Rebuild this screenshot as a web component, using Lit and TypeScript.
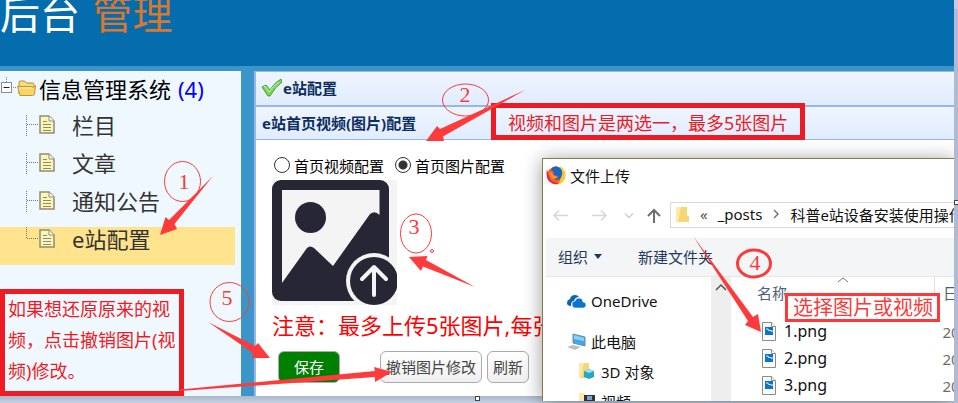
import { LitElement, html, svg, css } from "lit";
import { customElement } from "lit/decorators.js";
import { classMap } from "lit/directives/class-map.js";

const leaves = ["栏目", "文章", "通知公告", "e站配置"];
const files = ["1.png", "2.png", "3.png"];

const pageIcon = svg`<svg class="leaf-icon" width="16" height="20" viewBox="0 0 16 20" aria-hidden="true">
  <path d="M1 1h9l5 5v12H1z" fill="#fdf6b8" stroke="#8f8c78" stroke-width="1.5"/>
  <path d="M10 1v5h5" fill="#fffde8" stroke="#8f8c78"/>
  <path d="M4 6.500h4M4 9.500h8M4 12.500h8M4 15.500h8" stroke="#8f8b6a" fill="none"/></svg>`;

const fileIcon = svg`<svg width="14" height="19" viewBox="0 0 14 19" aria-hidden="true">
  <path d="M.5.500h9l4 4v14H.500z" fill="#fafafa" stroke="#8a8a8a"/>
  <path d="M9.500.500v4h4" fill="#fff" stroke="#8a8a8a"/>
  <rect x="3" y="5" width="8" height="8" fill="#0a74d1"/>
  <path d="M4 7h2l1 2 1-1 2 2V8" fill="none" stroke="#d9ecfb"/></svg>`;

@customElement("admin-tree")
export class AdminTree extends LitElement {
  static styles = css`
    :host { display: block; padding-top: 5px; }
    ul { list-style: none; margin: 0; padding: 0; }
    a { color: #333; text-decoration: none; }
    .root { display: flex; align-items: center; height: 28px; margin-bottom: 9px; font-size: 22px; line-height: 26px; color: #000; }
    .root svg { flex: none; }
    .root .label { margin-left: 3px; }
    .root span { height: 28px; }
    .count { color: #00f; margin-left: 7px; }
    .leaf { display: flex; align-items: flex-start; height: 38px; margin-right: 6px; padding-left: 26px; }
    .leaf.active { background: #ffe48d; }
    .leaf-icon { margin: 2px 0 0 1px; }
    .leaf a { margin-left: 17px; font-size: 22px; line-height: 25px; }
    .branch { width: 12px; height: 23px; }
  `;
  render() {
    return html`
      <div class="root">
        <svg width="36" height="28" viewBox="0 0 36 28" aria-hidden="true">
          <path d="M6.500 1v5M13 11.500h4" stroke="#888" stroke-dasharray="1 1"/>
          <rect x="1.500" y="6.500" width="10" height="10" fill="#fff" stroke="#8c8c8c"/>
          <path d="M3.500 11.500h6" stroke="#222"/>
          <path d="M19 18V6.500q0-1.500 1.500-1.500h4l2 2h6q1.500 0 1.500 1.500V11" fill="#f6dc83" stroke="#b98b26"/>
          <path d="M17.500 10.500h14l2 1 2-2-1 8.500q-.5 1.500-2 1.500H20z" fill="#f9d565" stroke="#c49428"/>
          <path d="M19.500 12h12" stroke="#fff1b8"/>
        </svg>
        <span class="label">信息管理系统</span><span class="count">(4)</span>
      </div>
      <ul>
        ${leaves.map((t, i) => html`<li class=${classMap({ leaf: true, active: i === 3 })}>
          <svg class="branch" viewBox="0 0 12 23" aria-hidden="true">
            <path d=${i === 3 ? "M.5 0V11.500" : "M.5 2V23"} stroke="#777" stroke-dasharray="1 1"/>
            <path d="M1 11.500H12" stroke="#777" stroke-dasharray="1 1"/></svg>
          ${pageIcon}<a href="#">${t}</a></li>`)}
      </ul>`;
  }
}

@customElement("config-panel")
export class ConfigPanel extends LitElement {
  static styles = css`
    :host { display: block; background: #fff; border-left: 2px solid #95b8e7; border-top: 1px solid #95b8e7; }
    h1, h2 { display: flex; align-items: center; margin: 0; box-sizing: border-box; padding: 0 0 2px 6px;
      color: #0e2d5f; font-size: 15px; font-weight: 700; background: linear-gradient(#eff5ff, #e0ecff); }
    h1 { height: 35px; padding-left: 5px; gap: 1px; border-bottom: 2px solid #95b8e7; }
    h2 { height: 33px; border-bottom: 1px solid #95b8e7; }
    .content { padding: 13px 0 13px 16px; }
    .choices { display: flex; gap: 10px; height: 27px; }
    label { display: flex; align-items: center; gap: 4px; font-size: 15px; line-height: 27px; }
    input { appearance: none; box-sizing: border-box; width: 16px; height: 16px; margin: 0 0 4px 2px;
      border: 1px solid #333; border-radius: 50%; background: #fff; }
    input:checked { background: radial-gradient(circle, #333 4px, #fff 5px); }
    label + label { margin-left: -1px; }
    .upload { display: block; padding: 0; border: 0; background: #f4f4f4; width: 125px; height: 125px; }
    .note { margin: 5px 0 11px; font-size: 22px; line-height: 30px; color: #f00; white-space: nowrap; }
    .actions { display: flex; gap: 5px; padding-left: 6px; }
    .actions button { box-sizing: border-box; height: 32px; padding: 0 5px; border: 1px solid #aaa; border-radius: 6px;
      background: linear-gradient(#fff, #f0f0f0); color: #444; font: inherit; font-size: 15px; line-height: 30px; }
    .actions .save { padding: 0 15px; margin-right: 35px; background: #008000; color: #fff; }
  `;
  render() {
    return html`
      <h1><svg width="21" height="20" viewBox="0 0 21 20" aria-hidden="true">
        <path d="M1 9l4-2 4 5Q13 5 20 1l1 3Q14 9 9 18H7z" fill="#7ad653" stroke="#4e9a46"/>
        <path d="M3 9l1-1 4 6Q12 8 18 4" fill="none" stroke="#c9f5a8"/></svg>e站配置</h1>
      <h2>e站首页视频(图片)配置</h2>
      <div class="content">
        <div class="choices">
          <label><input type="radio" name="kind" />首页视频配置</label>
          <label><input type="radio" name="kind" checked />首页图片配置</label>
        </div>
        <button class="upload" aria-label="上传图片">
          <svg width="125" height="125" viewBox="0 0 125 125">
            <rect width="117" height="121" rx="9" fill="#272635"/>
            <path d="M10 10H107.500V35Q103 30 98 34L61 86 42 68Q38 65 35 68L10 103z" fill="#f4f4f4"/>
            <circle cx="38.500" cy="37.500" r="15.500" fill="#272635"/>
            <circle cx="102" cy="101" r="28" fill="#f4f4f4"/>
            <circle cx="102" cy="101" r="24" fill="#272635"/>
            <path d="M102 115V87M90 99l12-12 12 12" fill="none" stroke="#f4f4f4" stroke-width="4" stroke-linecap="round" stroke-linejoin="round"/>
          </svg>
        </button>
        <p class="note">注意：最多上传5张图片,每张图片</p>
        <div class="actions">
          <button class="save">保存</button><button>撤销图片修改</button><button>刷新</button>
        </div>
      </div>`;
  }
}

@customElement("file-dialog")
export class FileDialog extends LitElement {
  static styles = css`
    :host { display: flex; flex-direction: column; box-sizing: border-box; padding-left: 1px; background: #fff; border: 1px solid #8b7a45;
      border-width: 1px 0 0 1px; box-shadow: 0 2px 18px #0006; font-size: 15px; color: #111; overflow: hidden; white-space: nowrap; }
    svg { flex: none; }
    .title { display: flex; align-items: center; gap: 4px; height: 32px; padding-left: 2px; }
    .nav { display: flex; align-items: center; height: 26px; margin: 11px 0 10px; }
    .nav .arrows { margin-right: 5px; }
    .path { flex: 1; display: flex; align-items: center; box-sizing: border-box; height: 26px; padding: 0 0 2px 5px;
      border: 1px solid #d9d9d9; border-right: 0; overflow: hidden; }
    .path .up { margin: 0 10px 0 11px; color: #555; }
    .path .sep { margin: 0 10px; }
    .tools { display: flex; gap: 36px; align-items: center; box-sizing: border-box; height: 39px; margin-left: 2px; padding: 0 0 2px 12px;
      background: #f4f5f7; border-bottom: 1px solid #e4e6e9; }
    .tools button { display: flex; align-items: center; gap: 6px; border: 0; padding: 0; background: none; color: #1e395b; font: inherit; }
    .body { flex: 1; display: flex; min-height: 0; }
    .places { width: 144px; padding: 9px 0 0 23px; flex: none; overflow: hidden; }
    .place { display: flex; align-items: center; gap: 5px; height: 30px; }
    .place.wide { margin-bottom: 10px; }
    .place.sub { padding-left: 12px; gap: 6px; }
    .bar { width: 20px; background: #eee; flex: none; text-align: center; }
    table { flex: 1; align-self: flex-start; margin-left: 3px; border-collapse: collapse; table-layout: fixed; width: 100px; }
    th, td { padding: 0; font-weight: 400; text-align: left; overflow: hidden; }
    th { height: 32px; line-height: 32px; color: #4c607a; }
    th:first-child { position: relative; padding-left: 23px; }
    th .sort { position: absolute; left: 103px; top: 0; }
    .date { width: 11px; padding-left: 8px; color: #6d6d6d; }
    th.date { border-left: 1px solid #e2e2e2; color: #4c607a; }
    tbody::before { content: ""; display: block; height: 9px; }
    tbody td { height: 27px; }
    .file { display: flex; align-items: center; gap: 8px; padding-left: 28px; font-size: 16px; line-height: 27px; }
  `;
  render() {
    return html`
      <div class="title"><svg width="20" height="20" viewBox="0 0 20 20" aria-hidden="true">
        <circle cx="10" cy="10.500" r="9" fill="#ff5a1f"/>
        <path d="M14 1q6 4 5.500 10-1 7-8 8.500Q17 14 14 1z" fill="#ffc928"/>
        <path d="M1 4q-1.500 8 2 12 5 4.500 10 2-8 0-10-6z" fill="#e5195f"/>
        <path d="M6 3Q10-1 15 4q3 5-1 10-4 2-7-1 4 1 5-2-3 0-5-2l1-2-3-2z" fill="#1667c4"/>
        <path d="M3 7l3 1 2 3 4 1q-3 3-7 1z" fill="#ff9a20"/></svg>文件上传</div>
      <div class="nav">
        <svg class="arrows" width="121" height="26" viewBox="0 0 121 26" fill="none" aria-hidden="true">
          <path d="M24 13.500H10M15 8.500l-5 5 5 5M48 13.500h14M57 8.500l5 5-5 5" stroke="#d5d5d5" stroke-width="1.500"/>
          <path d="M81 11.500l4 4 4-4" stroke="#cfcfcf" stroke-width="1.500"/>
          <path d="M110 21V8M104 14l6-6 6 6" stroke="#6d6d6d" stroke-width="2"/></svg>
        <div class="path">
          <svg width="13" height="17" viewBox="0 0 13 17" aria-hidden="true"><path d="M0 1h6v15H0z" fill="#ffe9a6"/><path d="M5 1h6v9h2v6H2z" fill="#f8d675"/></svg>
          <span class="up">«</span><span>_posts</span>
          <svg class="sep" width="8" height="10" viewBox="0 0 8 10" aria-hidden="true"><path d="M2 1l4 4-4 4" fill="none" stroke="#777" stroke-width="1.500"/></svg>
          <span>科普e站设备安装使用操作</span>
        </div>
      </div>
      <div class="tools">
        <button>组织<svg width="8" height="5" viewBox="0 0 8 5" aria-hidden="true"><path d="M0 0h8L4 5z" fill="#1e395b"/></svg></button>
        <button>新建文件夹</button>
      </div>
      <div class="body">
        <div class="places">
          <div class="place wide"><svg width="19" height="14" viewBox="0 0 19 14" aria-hidden="true">
            <path d="M0 9q0-3 3-4 1-4 5-4 3 0 4 2-4 0-5 4-3 0-3 5Q0 12 0 9z" fill="#0a64b4"/>
            <path d="M5 10q0-3 3-3 1-3 4-3 4 0 4 4 3 0 3 3t-3 3H8q-3 0-3-4z" fill="#0a74d1" stroke="#fff" stroke-width=".6"/></svg>OneDrive</div>
          <div class="place"><svg width="19" height="17" viewBox="0 0 19 17" aria-hidden="true">
            <path d="M6 1l12 3v9L6 10z" fill="#3fa9e8" stroke="#6c8da5"/><path d="M7 2l10 3v3L7 6z" fill="#8bd0f7"/>
            <path d="M0 14l6-2 8 2-6 3z" fill="#b8c0c7"/></svg>此电脑</div>
          <div class="place sub"><svg width="16" height="18" viewBox="0 0 16 18" aria-hidden="true">
            <path d="M0 1h6v15H0z" fill="#ffe9a6"/><path d="M5 1h5v15H2z" fill="#f8d675"/>
            <path d="M5 9l5-2 5 2v6l-5 2-5-2z" fill="#25a7c7"/><path d="M5 9l5-2 5 2-5 2z" fill="#9fe3ef"/></svg>3D 对象</div>
          <div class="place sub"><svg width="16" height="18" viewBox="0 0 16 18" aria-hidden="true">
            <path d="M0 1h6v15H0z" fill="#ffe9a6"/><path d="M5 3h11v12H5z" fill="#333"/><path d="M8 4h5v4H8z" fill="#78a6dc"/></svg>视频</div>
        </div>
        <div class="bar"><svg width="12" height="20" viewBox="0 0 12 20" aria-hidden="true"><path d="M1 13l5-5 5 5" fill="none" stroke="#555" stroke-width="1.500"/></svg></div>
        <table>
          <thead><tr><th>名称<svg class="sort" width="12" height="6" viewBox="0 0 12 6" aria-hidden="true"><path d="M1 5l5-4 5 4" fill="none" stroke="#777"/></svg></th><th class="date">日期</th></tr></thead>
          <tbody>${files.map((f) => html`<tr><td><div class="file">${fileIcon}${f}</div></td><td class="date">2018</td></tr>`)}</tbody>
        </table>
      </div>`;
  }
}

@customElement("app-root")
export class AppRoot extends LitElement {
  static styles = css`
    :host { display: block; position: relative; overflow: hidden; background: #c6d2e3;
      font-family: "Noto Sans", "Noto Sans CJK SC", sans-serif; }
    .shot { margin-right: 4px; background: #3b95c8; }
    header { height: 66px; background: #056cae; color: #fff; font-size: 40px; line-height: 28px; }
    header em { font-style: normal; color: #d9772f; margin-left: 2px; }
    .columns { display: flex; gap: 13px; padding-top: 5px; }
    admin-tree { width: 241px; flex: none; background: #f0f8ff; }
    config-panel { flex: 1; min-width: 0; }
    footer { height: 7px; background: linear-gradient(#a9b7cb, #c6d2e3); }
    file-dialog { position: absolute; left: 542px; top: 158px; right: 4px; bottom: 2px; }
    .edge { position: absolute; right: 0; top: 0; bottom: 0; width: 4px; background: linear-gradient(#c5cbe0 9px, #aebbd3 9px); }
    .callout { position: absolute; box-sizing: border-box; border: 5px solid #ed1c24; color: #ed1c24; font-size: 18px; white-space: nowrap; }
    .either { left: 491px; top: 103px; width: 314px; height: 37px; padding-left: 12px; line-height: 30px; }
    .restore { left: 0; top: 289px; width: 184px; height: 107px; padding-left: 3px; line-height: 31px; }
    .choose { left: 785px; top: 293px; width: 155px; height: 29px; padding-left: 5px; border: 3px solid #fb3b3b; background: #fff;
      color: #fb3b3b; font-size: 20px; line-height: 23px; }
    .marks { position: absolute; left: 0; top: 0; }
    .marks .ring { fill: none; stroke: #fb3b3b; }
    .marks .bold { stroke-width: 3px; }
    .marks .digit { fill: #fb3b3b; font-family: "Liberation Serif", serif; font-size: 22px; text-anchor: middle; }
    .marks .arrow { fill: #ff3a3a; }
    .handle { fill: #fff; stroke: #444; }
  `;
  render() {
    return html`
      <div class="shot">
        <header>后台 <em>管理</em></header>
        <div class="columns"><admin-tree></admin-tree><config-panel></config-panel></div>
      </div>
      <footer></footer>
      <file-dialog></file-dialog>
      <div class="edge"></div>
      <div class="callout either">视频和图片是两选一，最多5张图片</div>
      <div class="callout restore">如果想还原原来的视<br />频，点击撤销图片(视<br />频)修改。</div>
      <div class="callout choose">选择图片或视频</div>
      <svg class="marks" width="958" height="403" viewBox="0 0 958 403">
        <ellipse class="ring" cx="182.500" cy="181.500" rx="18" ry="20"/><text class="digit" x="184" y="189">1</text>
        <ellipse class="ring" cx="465.500" cy="100" rx="23" ry="16"/><text class="digit" x="465" y="102">2</text>
        <ellipse class="ring" cx="416" cy="233.500" rx="15.500" ry="19.500"/><text class="digit" x="414" y="234">3</text>
        <circle class="ring" cx="432" cy="251" r="1.500"/>
        <ellipse class="ring bold" cx="754" cy="263.500" rx="16.500" ry="13.500"/><text class="digit" x="755" y="270">4</text>
        <circle class="ring" cx="229.500" cy="302" r="19.500"/><text class="digit" x="227" y="305">5</text>
        <path class="arrow" d="M213 176L174.500 224 177 229 160 235 165.500 217 169 220z"/>
        <path class="arrow" d="M525 90L443 136.500 444 141 426 141 437 126 440 129z"/>
        <path class="arrow" d="M475 287L423 266.500 421 271 409 257 427.500 256 426 260z"/>
        <path class="arrow" d="M693 236L753 317 758 314 761 332 745 325 748 321z"/>
        <path class="arrow" d="M208 322L255 346 258 343 270 358 252 358 253 353z"/>
        <path class="arrow" d="M180 389.500L375 371 374 367 392 372 375 382 375 377 180 391z"/>
        <rect class="handle" x="475.500" y="396.500" width="4" height="4"/>
        <rect class="handle" x="954.500" y="200.500" width="4" height="4"/>
      </svg>`;
  }
}
